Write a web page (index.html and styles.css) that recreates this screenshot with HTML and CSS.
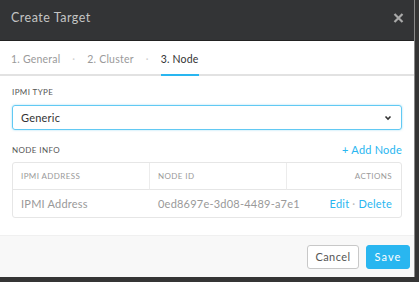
FILE: index.html
```html
<!DOCTYPE html>
<html lang="en">
<head>
  <meta charset="UTF-8" />
  <title>Create Target</title>
  <link rel="stylesheet" href="styles.css">
</head>
<body>
  <div class="modal">
    <div class="modal-header">
      <span class="modal-title">Create Target</span>
      <svg class="modal-close" width="11" height="10" viewBox="0 0 11 10"><path d="M1.5 1 L9.5 9 M9.5 1 L1.5 9" stroke="#a9a9a9" stroke-width="2.2"/></svg>
    </div>
    <div class="steps">
      <div class="step">1. General</div>
      <div class="step-sep">&middot;</div>
      <div class="step">2. Cluster</div>
      <div class="step-sep">&middot;</div>
      <div class="step active">3. Node</div>
    </div>
    <div class="modal-body">
      <div class="field-label">IPMI Type</div>
      <div class="select">
        <span>Generic</span>
        <svg class="chevron" width="8" height="6" viewBox="0 0 8 6"><path d="M1.5 1.5 L4 4 L6.5 1.5" fill="none" stroke="#333" stroke-width="1.6"/></svg>
      </div>
      <div class="info-head">
        <div class="field-label">Node Info</div>
        <a class="link add-node">+ Add Node</a>
      </div>
      <table class="nodes">
        <tr>
          <th class="col-addr">IPMI Address</th>
          <th class="col-id">Node ID</th>
          <th class="right">Actions</th>
        </tr>
        <tr>
          <td>IPMI Address</td>
          <td>0ed8697e-3d08-4489-a7e1</td>
          <td class="right"><a class="link">Edit</a> <span class="dot">&middot;</span> <a class="link">Delete</a></td>
        </tr>
      </table>
    </div>
    <div class="modal-footer">
      <button class="btn cancel">Cancel</button>
      <button class="btn primary">Save</button>
    </div>
  </div>
</body>
</html>
```

FILE: styles.css
```css
body {
  margin: 0;
  background-color: #353535;
  font-family: 'Lato', 'Open Sans', sans-serif;
  height: 282px;
  overflow: hidden;
}
.modal {
  width: 415px;
  height: 277px;
  background-color: #fff;
  display: flex;
  flex-direction: column;
  border-right: 1px solid #8a8a8a;
  box-sizing: border-box;
}
.modal-header {
  height: 41px;
  flex: none;
  background-color: #333436;
  display: flex;
  align-items: center;
  justify-content: space-between;
  padding: 0 9px 5px 11px;
  border-bottom: 1px solid #222;
  box-sizing: border-box;
}
.modal-title {
  color: #c4c4c4;
  font-size: 12.5px;
  letter-spacing: 0.04em;
}
.modal-close {
  margin-right: 1px;
}
.steps {
  height: 35px;
  flex: none;
  display: flex;
  align-items: stretch;
  gap: 12px;
  padding-left: 11px;
  border-bottom: 2px solid #e2e2e2;
  box-sizing: border-box;
}
.step, .step-sep {
  display: flex;
  align-items: center;
  font-size: 10.5px;
  letter-spacing: 0.02em;
  color: #9a9a9a;
  padding-top: 2px;
}
.step-sep {
  color: #d0d0d0;
}
.step.active {
  color: #333;
  border-bottom: 2px solid #29b6f0;
  margin-bottom: -2px;
}
.modal-body {
  flex: 1;
  padding: 10px 12px 0 12px;
}
.field-label {
  font-size: 8px;
  color: #555;
  text-transform: uppercase;
  letter-spacing: 0.05em;
  line-height: 12px;
}
.select {
  margin-top: 7px;
  height: 25px;
  box-sizing: border-box;
  border: 1px solid #62c9f3;
  border-radius: 3px;
  box-shadow: 0 0 2px rgba(41, 182, 240, 0.5);
  display: flex;
  align-items: center;
  justify-content: space-between;
  padding: 0 9px 0 8px;
  font-size: 11px;
  letter-spacing: 0.02em;
  color: #333;
}
.chevron {
  margin-top: 1px;
}
.info-head {
  margin-top: 14px;
  display: flex;
  justify-content: space-between;
  align-items: center;
}
.link {
  color: #29b6f0;
  text-decoration: none;
  font-size: 11px;
  letter-spacing: 0.02em;
}
.add-node {
  margin-top: -2px;
}
.nodes {
  margin-top: 6px;
  width: 100%;
  table-layout: fixed;
  border-collapse: separate;
  border-spacing: 0;
  border: 1px solid #e6e6e6;
  border-radius: 3px;
}
.nodes th {
  font-size: 8px;
  font-weight: normal;
  color: #9a9a9a;
  text-transform: uppercase;
  letter-spacing: 0.05em;
  text-align: left;
  height: 26px;
  padding: 0 8px;
  border-bottom: 1px solid #e6e6e6;
  border-right: 1px solid #ececec;
}
.nodes th.col-addr {
  width: 120px;
}
.nodes th.col-id {
  width: 120px;
}
.nodes th:last-child {
  border-right: none;
}
.nodes td {
  font-size: 11px;
  letter-spacing: 0.02em;
  color: #999;
  height: 27px;
  padding: 0 8px;
  white-space: nowrap;
}
.nodes .right {
  text-align: right;
  padding-right: 9px;
}
.nodes .dot {
  color: #bbb;
}
.modal-footer {
  height: 42px;
  flex: none;
  background-color: #f8f8f8;
  border-top: 1px solid #f0f0f0;
  display: flex;
  align-items: center;
  justify-content: flex-end;
  gap: 7px;
  padding-right: 4px;
  box-sizing: border-box;
}
.btn {
  height: 24px;
  padding: 0;
  font-family: inherit;
  font-size: 11px;
  letter-spacing: 0.04em;
  color: #555;
  background-color: #fff;
  border: 1px solid #c8c8c8;
  border-radius: 3px;
}
.btn.cancel {
  width: 52px;
}
.btn.primary {
  width: 44px;
  color: #fff;
  background-color: #29b6f0;
  border-color: #29b6f0;
  letter-spacing: 0.1em;
}
```
